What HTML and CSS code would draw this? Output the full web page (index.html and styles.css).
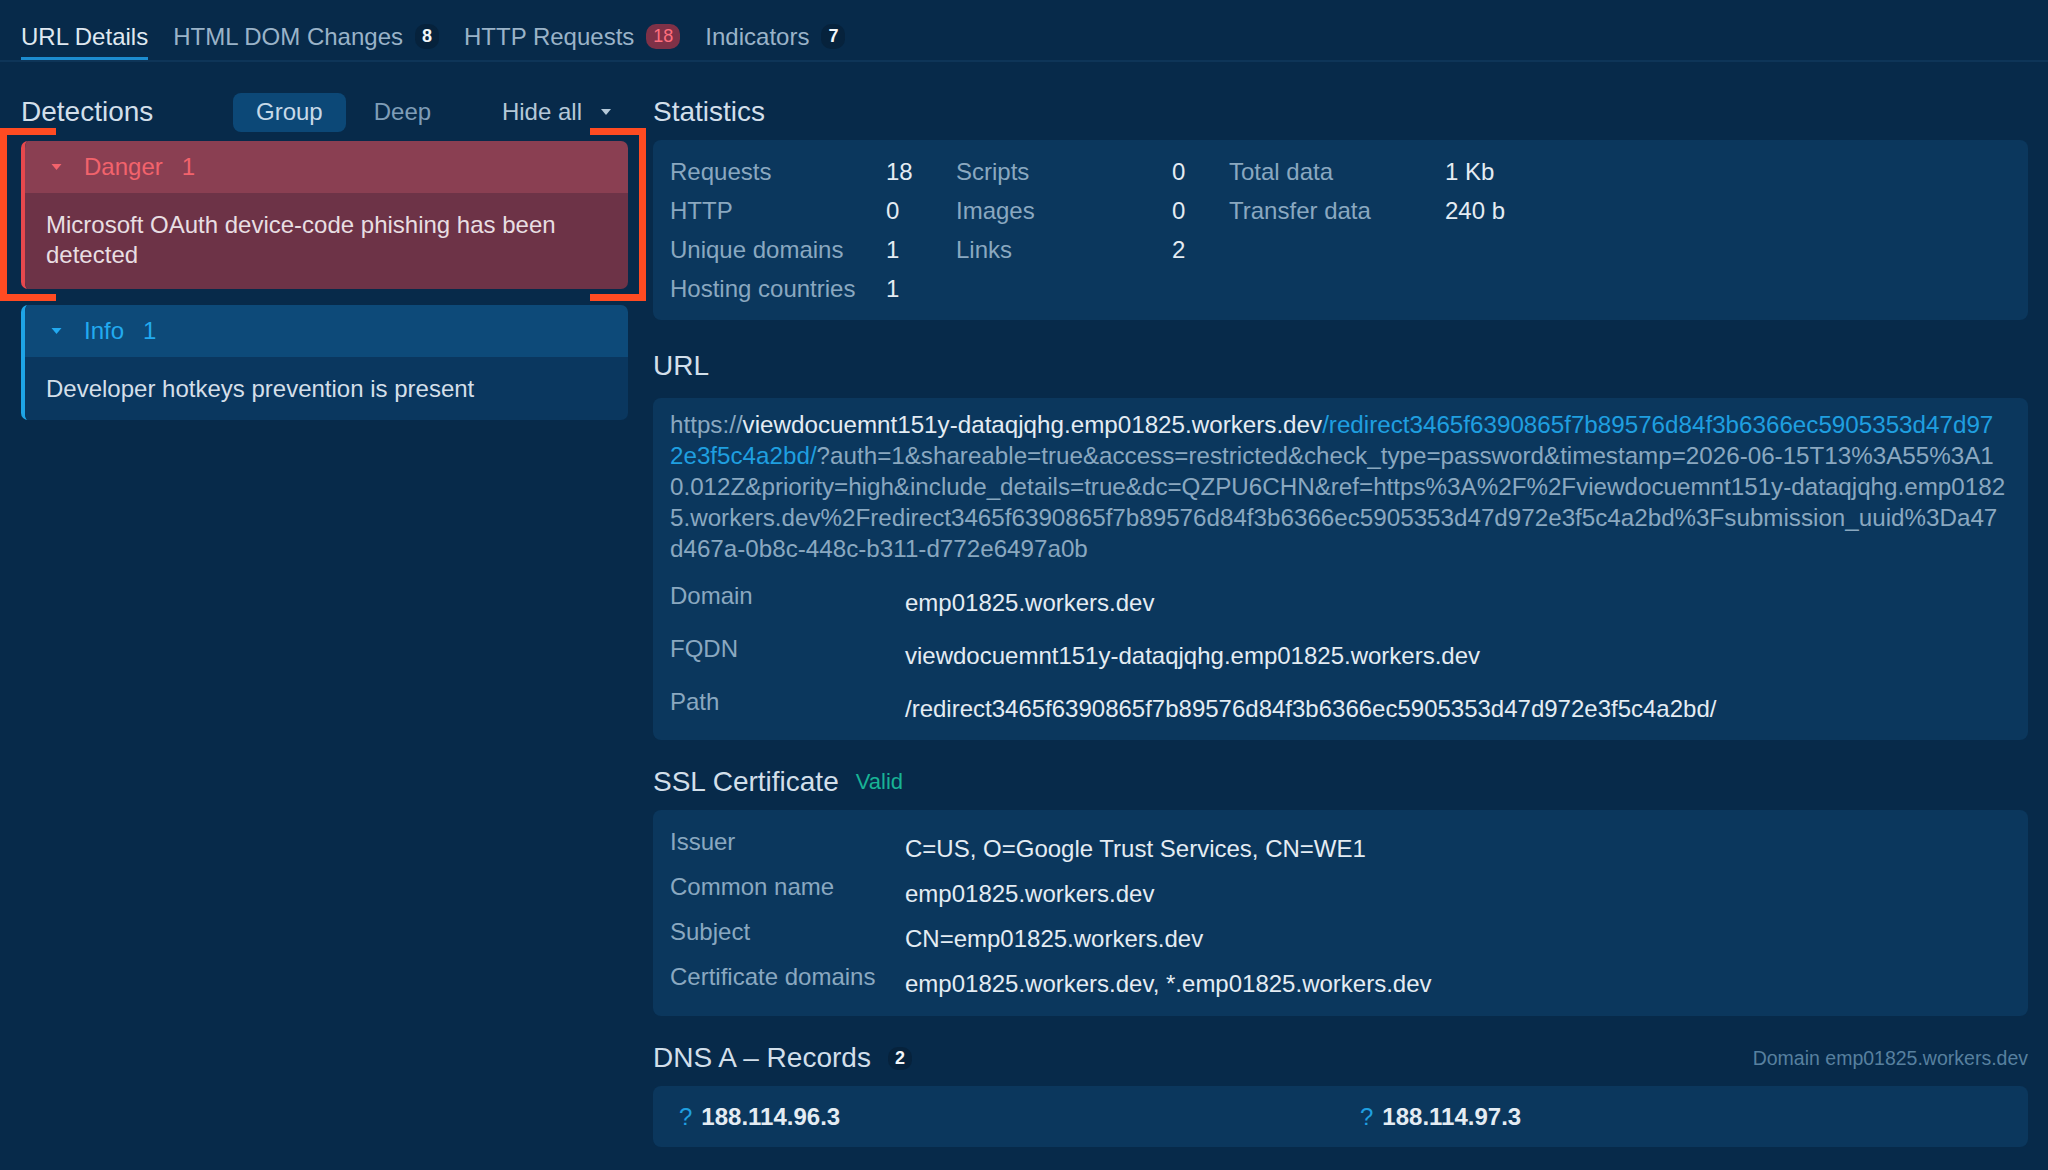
FILE: index.html
```html
<!DOCTYPE html>
<html lang="en">
<head>
    <meta charset="UTF-8">
    <title>URL Details</title>
    <link rel="stylesheet" href="styles.css">
</head>
<body>
    <nav class="tabs">
        <div class="tab tab-active">URL Details</div>
        <div class="tab">HTML DOM Changes <span class="tab-count">8</span></div>
        <div class="tab">HTTP Requests <span class="tab-count tab-count-danger">18</span></div>
        <div class="tab">Indicators <span class="tab-count">7</span></div>
    </nav>

    <main class="layout">
        <aside class="detections">
            <div class="det-head">
                <h2 class="det-heading">Detections</h2>
                <div class="modes">
                    <button class="mode mode-active">Group</button>
                    <button class="mode">Deep</button>
                </div>
                <button class="hide-all">Hide all
                    <svg class="caret" width="10" height="6" viewBox="0 0 10 6"><path d="M0 0h10L5 6z" fill="currentColor"/></svg>
                </button>
            </div>

            <div class="det-group det-danger">
                <div class="det-title">
                    <svg class="caret" width="11" height="6" viewBox="0 0 10 6"><path d="M0 0h10L5 6z" fill="currentColor"/></svg>
                    <span>Danger</span>
                    <span class="det-count">1</span>
                </div>
                <div class="det-body">Microsoft OAuth device-code phishing has been detected</div>
            </div>

            <div class="det-group det-info">
                <div class="det-title">
                    <svg class="caret" width="11" height="6" viewBox="0 0 10 6"><path d="M0 0h10L5 6z" fill="currentColor"/></svg>
                    <span>Info</span>
                    <span class="det-count">1</span>
                </div>
                <div class="det-body">Developer hotkeys prevention is present</div>
            </div>

            <div class="focus-frame">
                <span class="frame-side frame-left"></span>
                <span class="frame-side frame-right"></span>
            </div>
        </aside>

        <div class="details">
            <section class="section">
                <div class="section-head"><h2>Statistics</h2></div>
                <div class="card stats">
                    <div class="stat-group stat-group-1">
                        <span class="label">Requests</span><span class="value">18</span>
                        <span class="label">HTTP</span><span class="value">0</span>
                        <span class="label">Unique domains</span><span class="value">1</span>
                        <span class="label">Hosting countries</span><span class="value">1</span>
                    </div>
                    <div class="stat-group stat-group-2">
                        <span class="label">Scripts</span><span class="value">0</span>
                        <span class="label">Images</span><span class="value">0</span>
                        <span class="label">Links</span><span class="value">2</span>
                    </div>
                    <div class="stat-group">
                        <span class="label">Total data</span><span class="value">1 Kb</span>
                        <span class="label">Transfer data</span><span class="value">240 b</span>
                    </div>
                </div>
            </section>

            <section class="section section-url">
                <div class="section-head"><h2>URL</h2></div>
                <div class="card url-card">
                    <div class="url-full">
                        <span class="url-line">https://<span class="url-host">viewdocuemnt151y-dataqjqhg.emp01825.workers.dev</span><span class="url-path">/redirect3465f6390865f7b89576d84f3b6366ec5905353d47d97</span></span>
                        <span class="url-line"><span class="url-path">2e3f5c4a2bd/</span>?auth=1&amp;shareable=true&amp;access=restricted&amp;check_type=password&amp;timestamp=2026-06-15T13%3A55%3A1</span>
                        <span class="url-line">0.012Z&amp;priority=high&amp;include_details=true&amp;dc=QZPU6CHN&amp;ref=https%3A%2F%2Fviewdocuemnt151y-dataqjqhg.emp0182</span>
                        <span class="url-line">5.workers.dev%2Fredirect3465f6390865f7b89576d84f3b6366ec5905353d47d972e3f5c4a2bd%3Fsubmission_uuid%3Da47</span>
                        <span class="url-line">d467a-0b8c-448c-b311-d772e6497a0b</span>
                    </div>
                    <div class="rows url-rows">
                        <div class="row"><span class="label">Domain</span><span class="value">emp01825.workers.dev</span></div>
                        <div class="row"><span class="label">FQDN</span><span class="value">viewdocuemnt151y-dataqjqhg.emp01825.workers.dev</span></div>
                        <div class="row"><span class="label">Path</span><span class="value">/redirect3465f6390865f7b89576d84f3b6366ec5905353d47d972e3f5c4a2bd/</span></div>
                    </div>
                </div>
            </section>

            <section class="section">
                <div class="section-head"><h2>SSL Certificate</h2><span class="valid">Valid</span></div>
                <div class="card ssl-card">
                    <div class="rows ssl-rows">
                        <div class="row"><span class="label">Issuer</span><span class="value">C=US, O=Google Trust Services, CN=WE1</span></div>
                        <div class="row"><span class="label">Common name</span><span class="value">emp01825.workers.dev</span></div>
                        <div class="row"><span class="label">Subject</span><span class="value">CN=emp01825.workers.dev</span></div>
                        <div class="row"><span class="label">Certificate domains</span><span class="value">emp01825.workers.dev, *.emp01825.workers.dev</span></div>
                    </div>
                </div>
            </section>

            <section class="section">
                <div class="section-head">
                    <h2>DNS A &ndash; Records</h2>
                    <span class="head-count">2</span>
                    <span class="head-note">Domain emp01825.workers.dev</span>
                </div>
                <div class="card dns-card">
                    <div class="ip"><span class="ip-geo">?</span>188.114.96.3</div>
                    <div class="ip"><span class="ip-geo">?</span>188.114.97.3</div>
                </div>
            </section>
        </div>
    </main>
</body>
</html>
```

FILE: styles.css
```css
:root {
    --bg: #072a4a;
    --card: #0b375d;
    --heading: #d2dfea;
    --label: #8aa8c0;
    --value: #e4ecf3;
    --accent: #1f9fe0;
    --danger: #e5484d;
    --frame: #ff4b22;
}

* {
    box-sizing: border-box;
}

body {
    margin: 0;
    width: 2048px;
    height: 1170px;
    overflow: hidden;
    background-color: var(--bg);
    color: var(--heading);
    font-family: "Liberation Sans", Arial, Helvetica, sans-serif;
    font-size: 24px;
}

h2 {
    margin: 0;
    font-size: 28px;
    font-weight: normal;
    color: var(--heading);
}

button {
    font-family: inherit;
    font-size: 24px;
    border: none;
    background: none;
    cursor: pointer;
}

/* Tabs */

.tabs {
    display: flex;
    gap: 25px;
    height: 62px;
    padding: 0 21px;
    border-bottom: 2px solid #0e3558;
}

.tab {
    display: flex;
    align-items: center;
    gap: 12px;
    height: 60px;
    padding-top: 16px;
    border-bottom: 3px solid transparent;
    color: #9ab3c8;
}

.tab-active {
    color: #dfe8f0;
    border-bottom-color: #1c8ccf;
}

.tab-count {
    padding: 2px 7px;
    border-radius: 10px;
    background-color: #06223c;
    color: #f2f6f9;
    font-size: 18px;
    font-weight: bold;
}

.tab-count-danger {
    background-color: #7f3147;
    color: #ff6f7e;
    font-weight: normal;
}

/* Layout */

.layout {
    display: flex;
    gap: 25px;
    padding: 26px 20px 0 21px;
}

/* Detections */

.detections {
    position: relative;
    flex: none;
    width: 607px;
}

.det-head {
    display: flex;
    align-items: center;
    height: 48px;
    margin-bottom: 5px;
}

.det-heading {
    width: 212px;
}

.modes {
    display: flex;
    gap: 5px;
}

.mode {
    height: 39px;
    padding: 0 23px;
    border-radius: 8px;
    color: #7f9db7;
}

.mode-active {
    background-color: #0c4877;
    color: #c7d9e8;
}

.hide-all {
    display: flex;
    align-items: center;
    gap: 19px;
    margin-left: auto;
    padding: 0 17px 0 0;
    color: #b4c8d8;
}

.det-group {
    border-left: 4px solid;
    border-radius: 7px;
    overflow: hidden;
    margin-bottom: 16px;
}

.det-title {
    display: flex;
    align-items: center;
    height: 52px;
    padding-left: 26px;
}

.det-title .caret {
    margin-right: 22px;
}

.det-count {
    margin-left: 19px;
}

.det-body {
    padding: 17px 25px 19px 21px;
    line-height: 30px;
}

.det-danger {
    border-left-color: var(--danger);
}

.det-danger .det-title {
    background-color: #8a3f52;
    color: #f2636c;
}

.det-danger .det-body {
    background-color: #6d3347;
    color: #e8dee2;
}

.det-info {
    border-left-color: #1ea4e6;
}

.det-info .det-title {
    background-color: #0d4a79;
    color: #22aaf0;
}

.det-info .det-body {
    padding: 17px 25px 16px 21px;
    background-color: #0a375f;
    color: #d4dfe9;
}

/* highlight brackets drawn over the danger group */
.focus-frame {
    position: absolute;
    left: -21px;
    top: 40px;
    width: 646px;
    height: 173px;
    pointer-events: none;
}

.frame-side {
    position: absolute;
    top: 0;
    bottom: 0;
    width: 56px;
    border: 7px solid var(--frame);
}

.frame-left {
    left: 0;
    border-right: none;
}

.frame-right {
    right: 0;
    border-left: none;
}

/* Details column */

.details {
    flex: 1;
    min-width: 0;
}

.section + .section {
    margin-top: 18px;
}

.section-url {
    margin-top: 22px !important;
}

.section-head {
    display: flex;
    align-items: center;
    gap: 17px;
    height: 48px;
    margin-bottom: 4px;
}

.section-url .section-head {
    margin-bottom: 8px;
}

.card {
    background-color: var(--card);
    border-radius: 8px;
    padding: 12px 17px;
}

.label {
    color: var(--label);
}

.value {
    color: var(--value);
}

.stats {
    display: flex;
}

.stat-group {
    display: grid;
    grid-template-columns: 216px auto;
    grid-auto-rows: 39px;
    align-items: center;
}

.stat-group-1 {
    width: 286px;
}

.stat-group-2 {
    width: 273px;
}

.url-card {
    padding: 11px 17px 16px;
}

.url-full {
    color: var(--label);
    font-size: 24.2px;
    line-height: 31px;
}

.url-line {
    display: block;
    white-space: nowrap;
}

.url-host {
    color: var(--value);
}

.url-path {
    color: var(--accent);
}

.rows {
    display: flex;
    flex-direction: column;
}

.row {
    display: grid;
    grid-template-columns: 235px 1fr;
    line-height: 31px;
}

.row .value {
    padding-top: 7px;
}

.url-rows {
    margin-top: 16px;
    gap: 15px;
}

.ssl-card {
    padding: 16px 17px 17px;
}

.ssl-rows {
    gap: 7px;
}

.valid {
    color: #18b395;
    font-size: 22px;
}

.head-count {
    padding: 1px 7px;
    border-radius: 10px;
    background-color: #06223c;
    color: #f2f6f9;
    font-size: 18px;
    font-weight: bold;
}

.head-note {
    margin-left: auto;
    color: #57809f;
    font-size: 19.5px;
}

.dns-card {
    display: grid;
    grid-template-columns: 1fr 1fr;
    column-gap: 30px;
    padding: 15px 17px 15px 26px;
    line-height: 31px;
}

.ip {
    color: var(--value);
    font-weight: bold;
}

.ip-geo {
    margin-right: 9px;
    color: var(--accent);
    font-weight: normal;
}
```
